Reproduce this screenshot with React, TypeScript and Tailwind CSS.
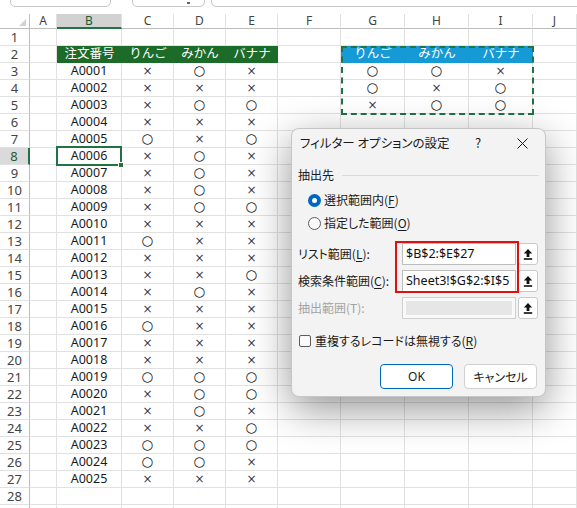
import React from "react";

type Mark = "o" | "x";

const colWidths = [
  "w-[27px]",
  "w-[65px]",
  "w-[52px]",
  "w-[52px]",
  "w-[52px]",
  "w-[63px]",
  "w-[64px]",
  "w-[64px]",
  "w-[64px]",
  "w-[44px]",
];

const colLetters = ["A", "B", "C", "D", "E", "F", "G", "H", "I", "J"];

// C, D, E for A0001..A0025
const orders: string[] = [
  "xox",
  "xxx",
  "xoo",
  "xxx",
  "oxo",
  "xox",
  "xox",
  "xox",
  "xoo",
  "xxx",
  "oxx",
  "xxx",
  "xxo",
  "xox",
  "xxx",
  "oxx",
  "xxx",
  "xxx",
  "ooo",
  "xoo",
  "xox",
  "xxo",
  "ooo",
  "oox",
  "xxx",
];

const criteria: string[] = ["oox", "oxo", "xoo"];

const fruits = ["りんご", "みかん", "バナナ"];

function MarkText({ mark }: { mark: Mark }) {
  if (mark === "o") {
    return (
      <span className="text-[13.5px] leading-none text-[#222] font-['DejaVu_Sans',sans-serif]">
        ○
      </span>
    );
  }
  return (
    <span className="text-[12px] leading-none text-[#3a3a50] font-['DejaVu_Sans',sans-serif]">
      ×
    </span>
  );
}

function cellContent(row: number, col: number) {
  // col: 0 = A ... 9 = J
  if (row === 2) {
    if (col === 1) return "注文番号";
    if (col >= 2 && col <= 4) return fruits[col - 2];
    if (col >= 6 && col <= 8) return fruits[col - 6];
    return null;
  }

  if (row >= 3 && row <= 27) {
    const order = orders[row - 3];
    if (col === 1) return `A${String(row - 2).padStart(4, "0")}`;
    if (col >= 2 && col <= 4) return <MarkText mark={order[col - 2] as Mark} />;
  }

  if (row >= 3 && row <= 5 && col >= 6 && col <= 8) {
    const crit = criteria[row - 3];
    return <MarkText mark={crit[col - 6] as Mark} />;
  }

  return null;
}

function cellColor(row: number, col: number) {
  if (row !== 2) return "bg-white border-r border-b border-[#e1e1e1] text-[#1a1a1a]";
  if (col >= 1 && col <= 4) return "bg-[#1d6b28] border-b border-[#1d6b28] text-white";
  if (col >= 6 && col <= 8) return "bg-[#159ad6] border-b border-[#159ad6] text-white";
  return "bg-white border-r border-b border-[#e1e1e1]";
}

function UploadIcon() {
  return (
    <svg width="10" height="12" viewBox="0 0 10 12">
      <path d="M5 1 L9.2 5.6 H6.4 V9 H3.6 V5.6 H0.8 Z" fill="#111" />
      <rect x="0.8" y="10.2" width="8.4" height="1.6" fill="#111" />
    </svg>
  );
}

function RangeRow({
  label,
  accel,
  value,
  disabled,
}: {
  label: string;
  accel: string;
  value: string;
  disabled?: boolean;
}) {
  return (
    <div className="flex items-center h-[22px] pl-[6px]">
      <div
        className={
          disabled
            ? "w-[104px] text-[12px] text-[#a3a3a3]"
            : "w-[104px] text-[12px] text-[#1a1a1a]"
        }
      >
        {label}(
        <span className={disabled ? "" : "underline underline-offset-2"}>{accel}</span>):
      </div>

      <div
        className={
          disabled
            ? "w-[114px] h-[22px] border border-[#cfcfcf] bg-[#f9f9f9] p-[3px]"
            : "w-[114px] h-[22px] border border-[#bdbdbd] bg-white flex items-center pl-[3px] overflow-hidden"
        }
      >
        {disabled ? (
          <div className="w-full h-full bg-[#e6e6e6]" />
        ) : (
          <span className="text-[12.5px] whitespace-nowrap text-[#111] font-['Noto_Sans',sans-serif]">
            {value}
          </span>
        )}
      </div>

      <div className="ml-[2px] w-[20px] h-[22px] border border-[#c9c9c9] rounded-[3px] bg-white flex items-center justify-center">
        <UploadIcon />
      </div>
    </div>
  );
}

function FilterDialog() {
  return (
    <div className="absolute left-[291px] top-[128px] w-[255px] h-[269px] bg-[#f3f3f3] border border-[#c6c6c6] rounded-[8px] shadow-[0_12px_40px_rgba(0,0,0,0.42)] flex flex-col font-['Noto_Sans_CJK_JP',sans-serif] [font-feature-settings:'palt']">
      <div className="flex items-center h-[28px] shrink-0">
        <div className="flex-1 pl-[8px] text-[12.5px] text-[#1a1a1a]">
          フィルター オプションの設定
        </div>
        <div className="w-[20px] text-center text-[13px] text-[#1a1a1a]">?</div>
        <div className="w-[20px] ml-[24px] mr-[13px] flex items-center justify-center">
          <svg width="11" height="11" viewBox="0 0 11 11">
            <path d="M0.5 0.5 L10.5 10.5 M10.5 0.5 L0.5 10.5" stroke="#1a1a1a" strokeWidth="1" />
          </svg>
        </div>
      </div>

      <div className="flex items-center h-[20px] mt-[8px] pl-[6px]">
        <span className="text-[12px] text-[#1a1a1a]">抽出先</span>
        <div className="flex-1 h-px bg-[#dadada] ml-[8px] mr-[6px]" />
      </div>

      <div className="flex items-center h-[20px] mt-[5px] pl-[16px]">
        <div className="w-[13px] h-[13px] rounded-full bg-[#0067c0] flex items-center justify-center">
          <div className="w-[5px] h-[5px] rounded-full bg-white" />
        </div>
        <span className="ml-[3px] text-[12px] text-[#1a1a1a]">
          選択範囲内(<span className="underline underline-offset-2">F</span>)
        </span>
      </div>

      <div className="flex items-center h-[20px] mt-[3px] pl-[16px]">
        <div className="w-[13px] h-[13px] rounded-full border border-[#5c5c5c] bg-[#fafafa]" />
        <span className="ml-[3px] text-[12px] text-[#1a1a1a]">
          指定した範囲(<span className="underline underline-offset-2">O</span>)
        </span>
      </div>

      <div className="mt-[10px] flex flex-col gap-[5px] relative">
        <RangeRow label="リスト範囲" accel="L" value="$B$2:$E$27" />
        <RangeRow label="検索条件範囲" accel="C" value="Sheet3!$G$2:$I$5" />
        <RangeRow label="抽出範囲" accel="T" value="" disabled />
      </div>

      <div className="flex items-center h-[20px] mt-[12px] pl-[7px]">
        <div className="w-[12px] h-[12px] rounded-[2px] border border-[#5c5c5c] bg-[#fafafa]" />
        <span className="ml-[4px] text-[12px] text-[#1a1a1a]">
          重複するレコードは無視する(<span className="underline underline-offset-2">R</span>)
        </span>
      </div>

      <div className="flex justify-end gap-[11px] mt-[13px] pr-[8px]">
        <div className="w-[73px] h-[25px] rounded-[4px] border border-[#0067c0] bg-white flex items-center justify-center text-[12px] text-[#1a1a1a] font-['Noto_Sans',sans-serif]">
          OK
        </div>
        <div className="w-[73px] h-[25px] rounded-[4px] border border-[#d0d0d0] bg-white flex items-center justify-center text-[12px] text-[#1a1a1a]">
          キャンセル
        </div>
      </div>

      {/* red annotation box */}
      <div className="absolute left-[103px] top-[112px] w-[124px] h-[52px] border-2 border-[#e01010] pointer-events-none" />
    </div>
  );
}

export default function App() {
  const rows = Array.from({ length: 28 }, (_, i) => i + 1);

  return (
    <div className="relative w-[577px] h-[508px] overflow-hidden bg-white font-['Noto_Sans','Noto_Sans_CJK_JP',sans-serif]">
      {/* formula bar remnants */}
      <div className="relative h-[14px] bg-white">
        <div className="absolute left-[10px] top-[-6px] w-[101px] h-[13px] border border-[#c8c8c8] rounded-[5px] bg-white" />
        <div className="absolute left-[132px] top-[-6px] w-[73px] h-[13px] border border-[#c8c8c8] rounded-[5px] bg-white">
          <div className="absolute right-[14px] top-[7px] w-[3px] h-[2px] bg-[#666]" />
        </div>
        <div className="absolute left-[211px] top-[-6px] w-[380px] h-[13px] border border-[#c8c8c8] rounded-[5px] bg-white" />
      </div>

      {/* column headers */}
      <div className="flex h-[15px]">
        <div className="relative w-[30px] h-[15px] border-r border-b border-[#bdbdbd] bg-white">
          <div className="absolute right-[3px] bottom-[2px] w-0 h-0 border-l-[7px] border-l-transparent border-b-[7px] border-b-[#d3d3d3]" />
        </div>
        {colLetters.map((letter, i) => (
          <div
            key={letter}
            className={
              i === 1
                ? `${colWidths[i]} h-[15px] bg-[#d2d2d2] border-r border-r-[#e1e1e1] border-b-2 border-b-[#217346] flex items-center justify-center text-[12px] text-[#1e5c36]`
                : `${colWidths[i]} h-[15px] bg-white border-r border-r-[#e1e1e1] border-b border-b-[#bdbdbd] flex items-center justify-center text-[12px] text-[#444]`
            }
          >
            {letter}
          </div>
        ))}
      </div>

      {/* rows */}
      {rows.map((row) => (
        <div key={row} className="flex h-[17px]">
          <div
            className={
              row === 8
                ? "w-[30px] h-[17px] bg-[#dadada] border-r-2 border-r-[#217346] border-b border-b-[#e1e1e1] flex items-center justify-center text-[13px] leading-none text-[#1e5c36]"
                : "w-[30px] h-[17px] bg-white border-r border-r-[#bdbdbd] border-b border-b-[#e1e1e1] flex items-center justify-center text-[13px] leading-none text-[#444]"
            }
          >
            {row}
          </div>
          {colWidths.map((width, col) => (
            <div
              key={col}
              className={`${width} h-[17px] ${cellColor(row, col)} flex items-center justify-center text-[12.5px] leading-none whitespace-nowrap`}
            >
              {cellContent(row, col)}
            </div>
          ))}
        </div>
      ))}

      {/* partial next row, no label visible */}
      <div className="flex h-[17px]">
        <div className="w-[30px] h-[17px] bg-white border-r border-[#bdbdbd]" />
        {colWidths.map((width, col) => (
          <div key={col} className={`${width} h-[17px] bg-white border-r border-[#e1e1e1]`} />
        ))}
      </div>

      {/* marching ants around criteria range */}
      <div className="absolute left-[341px] top-[46px] w-[193px] h-[69px] border-2 border-dashed border-[#217346] pointer-events-none" />

      {/* active cell B8 */}
      <div className="absolute left-[56px] top-[146px] w-[66px] h-[20px] border-2 border-[#217346] pointer-events-none">
        <div className="absolute right-[-4px] bottom-[-4px] w-[6px] h-[6px] bg-[#217346] border border-white" />
      </div>

      <FilterDialog />
    </div>
  );
}
